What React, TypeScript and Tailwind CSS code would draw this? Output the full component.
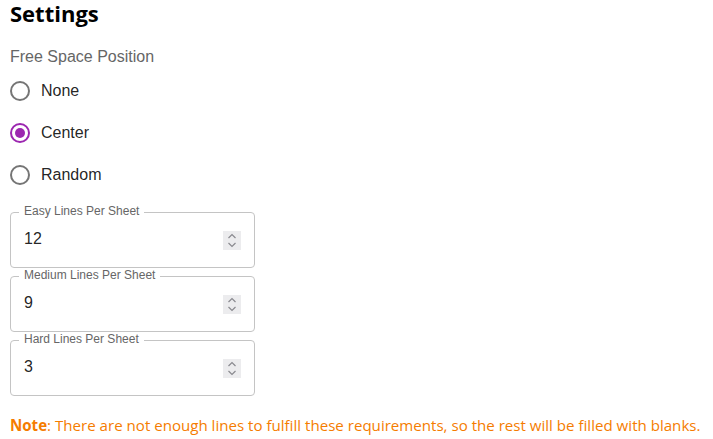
import React from "react";

const Radio = ({ label, checked }: { label: string; checked?: boolean }) => (
  <div className="flex items-center h-[42px]">
    <div className="w-[42px] h-[42px] -ml-[11px] flex items-center justify-center">
      <div
        className={
          "w-5 h-5 rounded-full border-2 flex items-center justify-center " +
          (checked ? "border-[#9c27b0]" : "border-[#757575]")
        }
      >
        {checked && <div className="w-2.5 h-2.5 rounded-full bg-[#9c27b0]" />}
      </div>
    </div>
    <span className="text-[16px] text-[#000000de] leading-6">{label}</span>
  </div>
);

const Spinner = () => (
  <div className="w-[18px] h-[19px] bg-[#ececee] flex items-center justify-center">
    <svg width="10" height="15" viewBox="0 0 10 15" fill="none" stroke="#8a8a8f" strokeWidth="1.2">
      <path d="M1.5 5 L5 1.5 L8.5 5" />
      <path d="M1.5 10 L5 13.5 L8.5 10" />
    </svg>
  </div>
);

const NumberField = ({ label, value }: { label: string; value: string }) => (
  <div className="relative w-[245px] h-[56px]">
    <fieldset className="absolute inset-0 -top-[5px] border border-[#c4c4c4] rounded-[4px] px-2 m-0 pointer-events-none">
      <legend className="text-[12px] px-[5px] leading-[11px] invisible">{label}</legend>
    </fieldset>
    <span className="absolute left-[14px] -top-[9px] text-[12px] leading-[17px] text-[#666666]">
      {label}
    </span>
    <div className="h-full flex items-center pl-[14px] pr-[14px]">
      <span className="flex-1 text-[16px] text-[#000000de] -mt-[2px]">{value}</span>
      <Spinner />
    </div>
  </div>
);

export default function App() {
  return (
    <div
      className="px-[10px] bg-white min-h-[439px]"
      style={{ fontFamily: '"Liberation Sans", Arial, sans-serif' }}
    >
      <h1
        className="text-[22px] font-bold leading-[26px] text-black m-0"
        style={{ fontFamily: '"Open Sans", sans-serif' }}
      >
        Settings
      </h1>
      <div className="mt-[19px] text-[16px] leading-6 text-[#666666]">Free Space Position</div>
      <div className="flex flex-col mt-[1px]">
        <Radio label="None" />
        <Radio label="Center" checked />
        <Radio label="Random" />
      </div>
      <div className="flex flex-col gap-2 mt-[16px]">
        <NumberField label="Easy Lines Per Sheet" value="12" />
        <NumberField label="Medium Lines Per Sheet" value="9" />
        <NumberField label="Hard Lines Per Sheet" value="3" />
      </div>
      <p
        className="mt-[17px] text-[15.1px] leading-6 text-[#f57c00] whitespace-nowrap"
        style={{ fontFamily: '"Open Sans", sans-serif' }}
      >
        <span className="font-bold">Note</span>: There are not enough lines to fulfill these requirements, so the rest will be filled with blanks.
      </p>
    </div>
  );
}
